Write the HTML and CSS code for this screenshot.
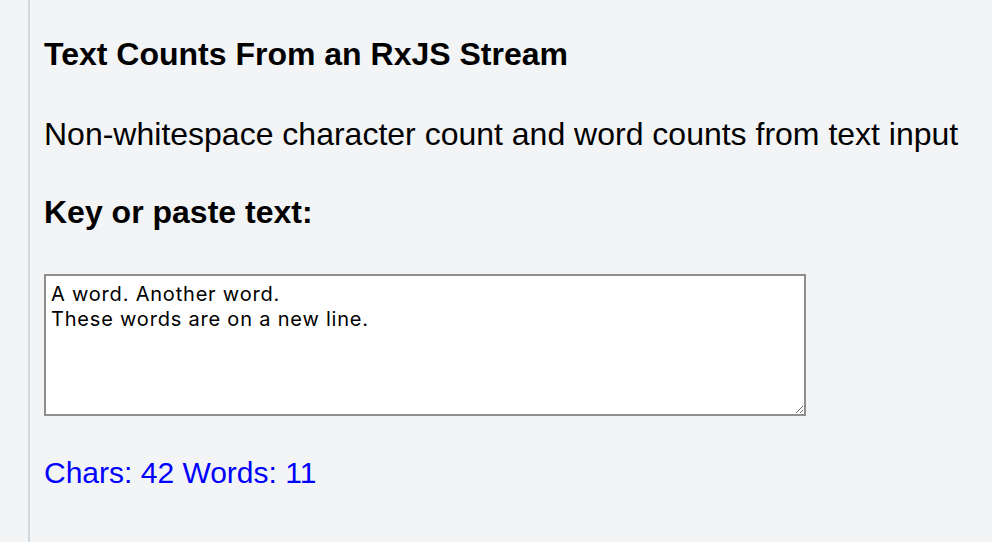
FILE: index.html
```html
<!DOCTYPE html>
<html>
<head>
<meta charset="utf-8">
<link rel="stylesheet" href="styles.css">
</head>
<body>
<main class="page">
  <h1 class="title">Text Counts From an RxJS Stream</h1>
  <p class="subtitle">Non-whitespace character count and word counts from text input</p>
  <h2 class="label">Key or paste text:</h2>
  <textarea class="input">A word. Another word.
These words are on a new line.</textarea>
  <p class="counts">Chars: 42 Words: 11</p>
</main>
</body>
</html>
```
FILE: styles.css
```css
html, body {
  margin: 0;
  padding: 0;
  background: #f3f4f6;
  height: 100%;
}
body {
  font-family: "Liberation Sans", Arial, sans-serif;
  color: #000;
}
.page {
  margin-left: 28px;
  border-left: 2px solid #d3d7de;
  min-height: 100%;
  padding: 36px 0 0 14px;
  box-sizing: border-box;
}
.title {
  font-size: 32px;
  font-weight: bold;
  margin: 0;
  line-height: 37px;
}
.subtitle {
  font-size: 32px;
  margin: 43px 0 0;
  line-height: 37px;
}
.label {
  font-size: 32px;
  font-weight: bold;
  margin: 41px 0 0;
  line-height: 37px;
}
.input {
  display: block;
  margin: 43px 0 0;
  width: 762px;
  height: 142px;
  box-sizing: border-box;
  border: 2px solid #8e8e8e;
  background: #fff;
  font-family: Inter, "DejaVu Sans", sans-serif;
  font-size: 20px;
  letter-spacing: 0.8px;
  line-height: 25px;
  padding: 6px 5px;
  color: #000;
  resize: both;
}
.counts {
  color: #0000ff;
  font-size: 30px;
  margin: 40px 0 0;
  line-height: 34px;
}
```
